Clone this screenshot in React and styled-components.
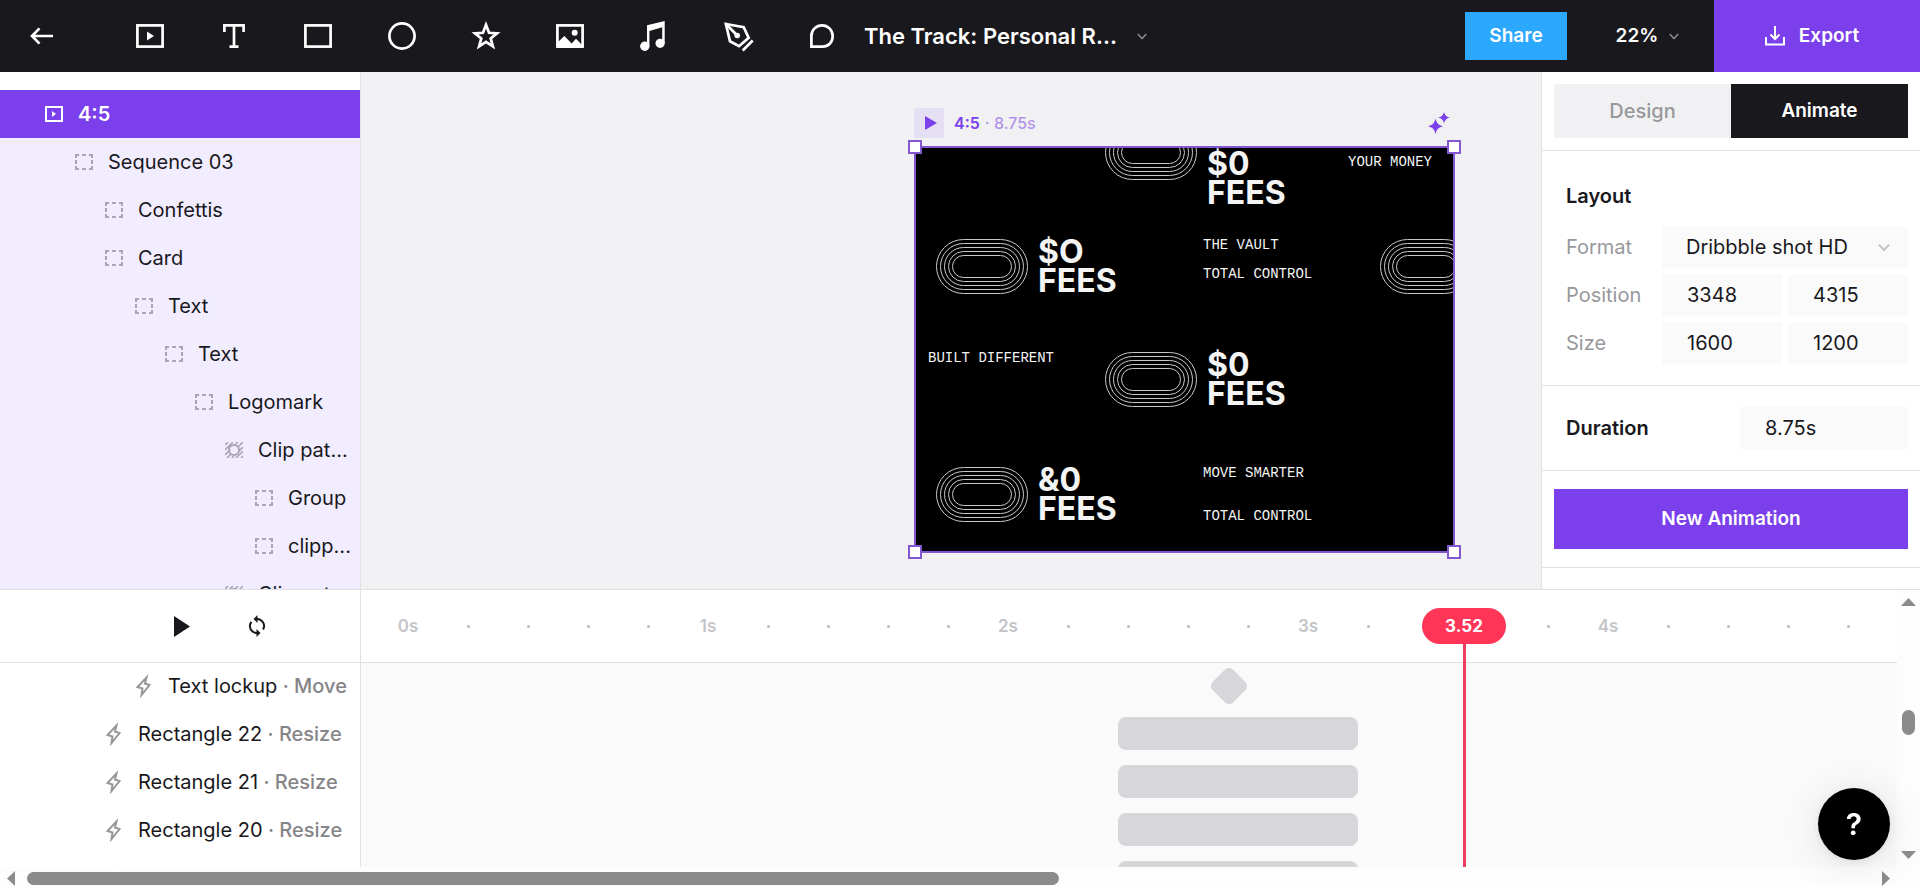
import React from 'react'
import styled, { createGlobalStyle } from 'styled-components'

const colors = {
    purple: '#7b40eb',
    frame: '#8457d2',
    dark: '#19181d',
    canvas: '#f1f1f4',
    line: '#e1e1e3',
    field: '#fafafa',
    muted: '#98989c',
    clip: '#d7d6db',
    red: '#ff3557',
    scroll: '#8b8b8b',
}

const PX_PER_SECOND = 300
const RULER_START = 47

const GlobalStyle = createGlobalStyle`
    * {
        box-sizing: border-box;
    }

    body {
        margin: 0;
        overflow: hidden;
        font-family: Inter, "Liberation Sans", sans-serif;
        font-size: 20px;
        line-height: 24px;
        color: ${colors.dark};
    }

    button, input, select {
        margin: 0;
        padding: 0;
        border: 0;
        border-radius: 0;
        background: none;
        color: inherit;
        font: inherit;
    }

    svg {
        display: block;
        flex: none;
    }
`

const Page = styled.div`
    display: flex;
    flex-direction: column;
    height: 100vh;
    background: white;
`

/* top bar */

const TopBar = styled.header`
    display: flex;
    flex: none;
    height: 72px;
    background: ${colors.dark};
    color: white;
`

const BackButton = styled.button`
    display: flex;
    align-items: center;
    justify-content: center;
    width: 83px;
    margin-right: 25px;
`

const Tools = styled.nav`
    display: flex;
`

const ToolButton = styled.button`
    display: flex;
    align-items: center;
    justify-content: center;
    width: 84px;
`

const TitleButton = styled.button`
    display: flex;
    align-items: center;
    gap: 20px;
    font-size: 22px;
    font-weight: 600;
`

const Actions = styled.div`
    display: flex;
    align-items: center;
    margin-left: auto;
    font-size: 19px;
    font-weight: 600;
`

const ShareButton = styled.button`
    width: 102px;
    height: 48px;
    background: #2ca8ff;
`

const ZoomButton = styled.button`
    display: flex;
    align-items: center;
    justify-content: center;
    gap: 11px;
    width: 147px;
    height: 72px;
    padding-left: 14px;
`

const ExportButton = styled.button`
    display: flex;
    align-items: center;
    justify-content: center;
    gap: 14px;
    width: 206px;
    height: 72px;
    padding-right: 10px;
    background: ${colors.purple};
`

/* layers */

const Main = styled.main`
    display: flex;
    flex: 1;
    min-height: 0;
`

const Layers = styled.aside`
    flex: none;
    width: 361px;
    padding-top: 18px;
    overflow: hidden;
    border-right: 1px solid ${colors.line};
`

const LayerRow = styled.div`
    display: flex;
    align-items: center;
    gap: 15px;
    height: 48px;
    padding-left: ${({ $level }) => 45 + $level * 30}px;
    padding-right: 8px;
    background: ${({ $active }) => ($active ? colors.purple : '#f1edfe')};
    color: ${({ $active }) => ($active ? 'white' : colors.dark)};
    font-weight: ${({ $active }) => ($active ? 600 : 400)};
`

const LayerName = styled.span`
    white-space: nowrap;
`

/* canvas */

const Canvas = styled.section`
    position: relative;
    flex: 1;
    min-width: 0;
    overflow: hidden;
    background: ${colors.canvas};
`

const Frame = styled.div`
    position: absolute;
    left: 553px;
    top: 36px;
    width: 541px;
`

const FrameHeader = styled.div`
    display: flex;
    align-items: center;
    height: 30px;
    margin-bottom: 8px;
    color: ${colors.purple};
    font-size: 16px;
    font-weight: 600;
`

const FramePlay = styled.button`
    display: flex;
    align-items: center;
    justify-content: center;
    width: 30px;
    height: 30px;
    margin-right: 10px;
    padding-left: 3px;
    background: #e4dff2;
`

const FrameTime = styled.span`
    margin-left: 5px;
    color: #b294ea;
    font-weight: 500;
`

const SparkButton = styled.button`
    margin-left: auto;
    margin-right: 5px;
`

const Artboard = styled.div`
    position: relative;
    height: 407px;
    border: 2px solid ${colors.frame};
    background: black;
    color: #f4f4f4;
`

const ArtClip = styled.div`
    position: absolute;
    inset: 0;
    overflow: hidden;
`

const ArtItem = styled.div`
    position: absolute;
    left: ${({ $x }) => $x}px;
    top: ${({ $y }) => $y}px;
`

const Fees = styled(ArtItem)`
    font-size: 32px;
    line-height: 29px;
    font-weight: 700;
`

const Caption = styled(ArtItem)`
    font-family: "Liberation Mono", monospace;
    font-size: 14px;
    line-height: 16px;
    white-space: pre;
`

const Handle = styled.span`
    position: absolute;
    width: 14px;
    height: 14px;
    border: 2px solid ${colors.frame};
    background: white;
    ${({ $v }) => $v}: -8px;
    ${({ $h }) => $h}: -8px;
`

/* inspector */

const Inspector = styled.aside`
    flex: none;
    width: 379px;
    overflow: hidden;
    border-left: 1px solid ${colors.line};
`

const Section = styled.section`
    padding: ${({ $pad }) => $pad};
    border-bottom: 1px solid ${colors.line};
`

const Tabs = styled.div`
    display: flex;
    height: 54px;
`

const Tab = styled.button`
    flex: 1;
    background: ${({ $active }) => ($active ? colors.dark : colors.canvas)};
    color: ${({ $active }) => ($active ? 'white' : colors.muted)};
    font-size: ${({ $active }) => ($active ? 19 : 20)}px;
    font-weight: ${({ $active }) => ($active ? 600 : 500)};
`

const Heading = styled.h2`
    margin: 0 0 18px;
    font-size: 20px;
    line-height: 24px;
    font-weight: 600;
`

const Fields = styled.div`
    display: grid;
    grid-template-columns: 90px 1fr 1fr;
    gap: 6px;
    align-items: center;
`

const FieldLabel = styled.label`
    color: ${colors.muted};
`

const Field = styled.input`
    width: 100%;
    height: 42px;
    padding-left: 25px;
    background: ${colors.field};
`

const SelectWrap = styled.div`
    display: flex;
    align-items: center;
    grid-column: span 2;
    padding-right: 18px;
    background: ${colors.field};
    color: #c4c4c8;
`

const Select = styled.select`
    flex: 1;
    height: 42px;
    padding-left: 24px;
    appearance: none;
    color: ${colors.dark};
`

const DurationRow = styled.div`
    display: grid;
    grid-template-columns: 1fr 168px;
    align-items: center;
    font-weight: 600;

    input {
        font-weight: 400;
    }
`

const AnimationButton = styled.button`
    display: block;
    width: 100%;
    height: 60px;
    background: ${colors.purple};
    color: white;
    font-size: 19px;
    font-weight: 600;
`

/* timeline */

const Timeline = styled.section`
    display: flex;
    flex-direction: column;
    flex: none;
    height: 297px;
    border-top: 1px solid ${colors.line};
`

const TimelineBody = styled.div`
    display: flex;
    flex: 1;
    min-height: 0;
`

const TrackList = styled.div`
    flex: none;
    width: 361px;
    overflow: hidden;
    border-right: 1px solid ${colors.line};
`

const Transport = styled.div`
    display: flex;
    align-items: center;
    gap: 58px;
    height: 73px;
    padding-left: 174px;
    border-bottom: 1px solid ${colors.line};
`

const TrackRow = styled.div`
    display: flex;
    align-items: center;
    height: 48px;
    padding-bottom: 3px;
    padding-left: ${({ $level }) => 75 + $level * 30}px;
    white-space: pre;
`

const TrackName = styled.span`
    margin-left: 16px;
`

const TrackEffect = styled.span`
    color: #858588;
    font-weight: 500;
`

const Tracks = styled.div`
    position: relative;
    flex: 1;
    min-width: 0;
    overflow: hidden;
    background: ${colors.field};
`

const Ruler = styled.div`
    display: flex;
    align-items: center;
    height: 73px;
    padding-left: 17px;
    border-bottom: 1px solid ${colors.line};
    background: white;
    color: #c4c4c7;
    font-size: 17px;
    font-weight: 600;
`

const Tick = styled.span`
    display: flex;
    flex: none;
    align-items: center;
    justify-content: center;
    width: 60px;
`

const Dot = styled.i`
    width: 3px;
    height: 3px;
    border-radius: 50%;
    background: #b9b9bc;
`

const Lane = styled.div`
    display: flex;
    align-items: center;
    height: 48px;
    padding-bottom: 3px;
`

const Clip = styled.div`
    flex: none;
    height: 33px;
    border-radius: 8px;
    background: ${colors.clip};
`

const Playhead = styled.div`
    position: absolute;
    top: 18px;
    bottom: 0;
    display: flex;
    flex-direction: column;
    align-items: center;
    width: 84px;
    margin-left: -42px;
`

const PlayheadTime = styled.span`
    width: 84px;
    height: 36px;
    border-radius: 18px;
    background: ${colors.red};
    color: white;
    font-size: 17px;
    line-height: 36px;
    font-weight: 700;
    text-align: center;
`

const PlayheadLine = styled.span`
    flex: 1;
    width: 3px;
    background: #ee3f60;
`

const ScrollY = styled.div`
    display: flex;
    flex-direction: column;
    align-items: center;
    flex: none;
    width: 23px;
    padding: 8px 0;
    background: #fdfdfd;
`

const ScrollX = styled.div`
    display: flex;
    align-items: center;
    flex: none;
    height: 19px;
    padding: 4px 30px 0 7px;
    background: #fdfdfd;
`

const ScrollRail = styled.div`
    flex: 1;
    margin: ${({ $vertical }) => ($vertical ? '104px 0 0' : '0 12px')};
`

const ThumbY = styled.div`
    width: 13px;
    height: 25px;
    border-radius: 7px;
    background: ${colors.scroll};
`

const ThumbX = styled.div`
    width: 56%;
    height: 13px;
    border-radius: 7px;
    background: ${colors.scroll};
`

const HelpButton = styled.button`
    position: fixed;
    right: 30px;
    bottom: 26px;
    width: 72px;
    height: 72px;
    border-radius: 50%;
    background: black;
    box-shadow: 0 4px 40px rgba(0, 0, 0, 0.1), 0 2px 10px rgba(0, 0, 0, 0.08);
    color: white;
    font-size: 30px;
    font-weight: 600;
`

/* icons */

const ToolIcon = ({ children }) => (
    <svg width="32" height="32" viewBox="0 0 32 32" fill="none" stroke="currentColor" strokeWidth="2.7">
        {children}
    </svg>
)

const tools = [
    {
        name: 'Artboard',
        icon: (
            <>
                <rect x="3.4" y="5.4" width="25.2" height="21.2" />
                <path d="M13 11.5v9l7-4.5z" fill="currentColor" stroke="none" />
            </>
        ),
    },
    { name: 'Text', icon: <path d="M6.4 12V5.4h19.2V12M16 5.4v21.2M11.5 26.7h9" /> },
    { name: 'Rectangle', icon: <rect x="3.4" y="5.4" width="25.2" height="21.2" /> },
    { name: 'Ellipse', icon: <circle cx="16" cy="16" r="12.6" /> },
    {
        name: 'Star',
        icon: <path d="M16 4.8l3 8 8 .5-6.3 5.1 2.2 7.9L16 21.8l-6.9 4.5 2.2-7.9L5 13.3l8-.5z" />,
    },
    {
        name: 'Image',
        icon: (
            <>
                <rect x="3.4" y="5.4" width="25.2" height="21.2" />
                <circle cx="20.7" cy="12.7" r="3" fill="currentColor" stroke="none" />
                <path d="M4 22l6.3-6 7.4 7.5 4.3-4.8 6 6.3v3H4z" fill="currentColor" stroke="none" />
            </>
        ),
    },
    {
        name: 'Audio',
        icon: (
            <g fill="currentColor" stroke="none">
                <path d="M9 5.3L26.7.9v22.4h-2.5V7.3L11.4 11v15.3H9z" />
                <circle cx="6.8" cy="26.2" r="4.7" />
                <circle cx="22.1" cy="23.3" r="4.6" />
            </g>
        ),
    },
    {
        name: 'Pen',
        icon: (
            <>
                <path d="M3.9 4l17.8 3.2 5 10.6-9.7 8.4-9-4.9z" />
                <path d="M3.5 3.5L15 15.3M20.7 30.5l10-10" />
                <circle cx="15.2" cy="15.5" r="2.8" fill="currentColor" stroke="none" />
            </>
        ),
    },
    { name: 'Comment', icon: <path d="M5.4 26.6V15.8a10.6 10.5 0 0 1 21.2 0v1a9.8 9.8 0 0 1-9.8 9.8z" /> },
]

const BackIcon = () => (
    <svg width="23" height="18" viewBox="0 0 23 18" fill="none" stroke="currentColor" strokeWidth="2.7">
        <path d="M9.5 1.4L2 9l7.5 7.6M2.5 9H23" />
    </svg>
)

const Chevron = ({ size = 10, color = '#88878b' }) => (
    <svg width={size} height={size} viewBox="0 0 10 10" fill="none" stroke={color} strokeWidth="1.6">
        <path d="M.7 3L5 7.5 9.3 3" />
    </svg>
)

const ExportIcon = () => (
    <svg width="20" height="20" viewBox="0 0 20 20" fill="none" stroke="currentColor" strokeWidth="2">
        <path d="M1 11v7.5h18V11M10 0v12.5M5.5 8.5L10 13l4.5-4.5" />
    </svg>
)

const PlayIcon = ({ width, height }) => (
    <svg width={width} height={height} viewBox="0 0 16 20" preserveAspectRatio="none">
        <path d="M0 0v20l16-10z" fill="currentColor" />
    </svg>
)

const LoopIcon = () => (
    <svg width="18" height="22" viewBox="0 0 18 22" fill="none" stroke="currentColor" strokeWidth="2">
        <path d="M4.2 16.3a7 7 0 0 1-.8-9.5M8.5 4a7 7 0 0 1 6.500 10.600M9.5 18a7 7 0 0 1-5.500-2" />
        <path d="M9.5 0v8l-4-4zM8.500 14v8l4-4z" fill="currentColor" stroke="none" />
    </svg>
)

const SparkIcon = () => (
    <svg width="22" height="22" viewBox="0 0 22 22" fill="currentColor">
        <path d="M7.5 6.5Q8.5 13 15 14.2 8.5 15.5 7.5 22 6.5 15.5 0 14.2 6.5 13 7.5 6.5zM16 0q.8 4.8 6 5.600-5.200.9-6 5.900-.8-5-6-5.900 5.200-.8 6-5.600z" />
    </svg>
)

const ArtboardIcon = () => (
    <svg width="18" height="16" viewBox="0 0 18 16" fill="none" stroke="currentColor" strokeWidth="2">
        <rect x="1" y="1" width="16" height="14" />
        <path d="M7 5v6l4-3z" fill="currentColor" stroke="none" />
    </svg>
)

const GroupIcon = () => (
    <svg width="18" height="16" viewBox="0 0 18 16" fill="none" stroke="#aaa5b5" strokeWidth="2">
        <path d="M1 4V1h3M7 1h4M14 1h3v3M17 6v4M17 12v3h-3M11 15H7M4 15H1v-3M1 10V6" />
    </svg>
)

const MaskIcon = () => (
    <svg width="18" height="16" viewBox="0 0 18 16" fill="none" stroke="#aaa5b5" strokeWidth="1.6">
        <path d="M0 3l3-3M0 8l8-8M0 13l5-5M10 3l3-3M13 5l5-5M14 9l4-4M2 16l4-4M7 16l2-2M11 16l7-7M16 16l2-2" />
        <circle cx="9" cy="8" r="5" strokeWidth="2" />
    </svg>
)

const BoltIcon = () => (
    <svg width="17" height="24" viewBox="0 0 17 24" fill="none" stroke="#98989b" strokeWidth="2">
        <path d="M11.5 3.5L2.5 13l5 1.5-1 6.500L14.500 11l-4.500-1.500z" />
    </svg>
)

const Arrow = ({ path, w, h }) => (
    <svg width={w} height={h} viewBox={`0 0 ${w} ${h}`} fill={colors.scroll}>
        <path d={path} />
    </svg>
)

const Track = () => (
    <svg width="92" height="55" viewBox="0 0 92 55" fill="none" stroke="#c9c9c9">
        {[0, 4, 8, 12, 16].map((d) => (
            <rect key={d} x={d + 0.5} y={d + 0.5} width={91 - d * 2} height={54 - d * 2} rx={27 - d} />
        ))}
    </svg>
)

/* data */

const layers = [
    { name: 'Sequence 03', level: 1 },
    { name: 'Confettis', level: 2 },
    { name: 'Card', level: 2 },
    { name: 'Text', level: 3 },
    { name: 'Text', level: 4 },
    { name: 'Logomark', level: 5 },
    { name: 'Clip pat...', level: 6, mask: true },
    { name: 'Group', level: 7 },
    { name: 'clipp...', level: 7 },
    { name: 'Clip pat...', level: 6, mask: true },
]

const tracks = [
    { name: 'Text lockup', effect: 'Move', level: 2 },
    { name: 'Rectangle 22', effect: 'Resize', level: 1, start: 710, length: 240 },
    { name: 'Rectangle 21', effect: 'Resize', level: 1, start: 710, length: 240 },
    { name: 'Rectangle 20', effect: 'Resize', level: 1, start: 710, length: 240 },
    { name: 'Rectangle 19', effect: 'Resize', level: 1, start: 710, length: 240 },
]

const rings = [[189, -23], [20, 91], [464, 91], [189, 204], [20, 319]]

const fees = [
    { x: 291, y: 1, top: '$0' },
    { x: 122, y: 89, top: '$O' },
    { x: 291, y: 202, top: '$0' },
    { x: 122, y: 317, top: '&0' },
]

const captions = [
    { x: 432, y: 6, text: 'YOUR MONEY' },
    { x: 287, y: 89, text: 'THE VAULT' },
    { x: 287, y: 118, text: 'TOTAL CONTROL' },
    { x: 12, y: 202, text: 'BUILT DIFFERENT' },
    { x: 287, y: 317, text: 'MOVE SMARTER' },
    { x: 287, y: 360, text: 'TOTAL CONTROL' },
]

const ticks = Array.from({ length: 25 }, (_, i) => i)
const playhead = 3.52

export default function App() {
    return (
        <Page>
            <GlobalStyle />
            <TopBar>
                <BackButton aria-label="Back"><BackIcon /></BackButton>
                <Tools>
                    {tools.map(({ name, icon }) => (
                        <ToolButton key={name} aria-label={name}>
                            <ToolIcon>{icon}</ToolIcon>
                        </ToolButton>
                    ))}
                </Tools>
                <TitleButton>
                    The Track: Personal R...
                    <Chevron />
                </TitleButton>
                <Actions>
                    <ShareButton>Share</ShareButton>
                    <ZoomButton>22% <Chevron /></ZoomButton>
                    <ExportButton><ExportIcon />Export</ExportButton>
                </Actions>
            </TopBar>

            <Main>
                <Layers>
                    <LayerRow $level={0} $active>
                        <ArtboardIcon />
                        <LayerName>4:5</LayerName>
                    </LayerRow>
                    {layers.map(({ name, level, mask }, i) => (
                        <LayerRow key={i} $level={level}>
                            {mask ? <MaskIcon /> : <GroupIcon />}
                            <LayerName>{name}</LayerName>
                        </LayerRow>
                    ))}
                </Layers>

                <Canvas>
                    <Frame>
                        <FrameHeader>
                            <FramePlay aria-label="Play artboard"><PlayIcon width={12} height={14} /></FramePlay>
                            4:5
                            <FrameTime>· 8.75s</FrameTime>
                            <SparkButton aria-label="Effects"><SparkIcon /></SparkButton>
                        </FrameHeader>
                        <Artboard>
                            <ArtClip>
                                {rings.map(([x, y]) => (
                                    <ArtItem key={`${x}-${y}`} $x={x} $y={y}><Track /></ArtItem>
                                ))}
                                {fees.map(({ x, y, top }) => (
                                    <Fees key={`${x}-${y}`} $x={x} $y={y}>{top}<br />FEES</Fees>
                                ))}
                                {captions.map(({ x, y, text }) => (
                                    <Caption key={`${x}-${y}`} $x={x} $y={y}>{text}</Caption>
                                ))}
                            </ArtClip>
                            <Handle $v="top" $h="left" />
                            <Handle $v="top" $h="right" />
                            <Handle $v="bottom" $h="left" />
                            <Handle $v="bottom" $h="right" />
                        </Artboard>
                    </Frame>
                </Canvas>

                <Inspector>
                    <Section $pad="12px">
                        <Tabs>
                            <Tab>Design</Tab>
                            <Tab $active>Animate</Tab>
                        </Tabs>
                    </Section>
                    <Section $pad="33px 12px 21px 24px">
                        <Heading>Layout</Heading>
                        <Fields>
                            <FieldLabel htmlFor="format">Format</FieldLabel>
                            <SelectWrap>
                                <Select id="format">
                                    <option>Dribbble shot HD</option>
                                </Select>
                                <Chevron size={12} color="currentColor" />
                            </SelectWrap>
                            <FieldLabel htmlFor="x">Position</FieldLabel>
                            <Field id="x" defaultValue="3348" />
                            <Field aria-label="Position y" defaultValue="4315" />
                            <FieldLabel htmlFor="width">Size</FieldLabel>
                            <Field id="width" defaultValue="1600" />
                            <Field aria-label="Height" defaultValue="1200" />
                        </Fields>
                    </Section>
                    <Section $pad="21px 12px 21px 24px">
                        <DurationRow>
                            <label htmlFor="duration">Duration</label>
                            <Field id="duration" defaultValue="8.75s" />
                        </DurationRow>
                    </Section>
                    <Section $pad="18px 12px">
                        <AnimationButton>New Animation</AnimationButton>
                    </Section>
                </Inspector>
            </Main>

            <Timeline>
                <TimelineBody>
                    <TrackList>
                        <Transport>
                            <button aria-label="Play"><PlayIcon width={16} height={21} /></button>
                            <button aria-label="Loop"><LoopIcon /></button>
                        </Transport>
                        {tracks.map(({ name, effect, level }) => (
                            <TrackRow key={name} $level={level}>
                                <BoltIcon />
                                <TrackName>{name}</TrackName>
                                <TrackEffect> · {effect}</TrackEffect>
                            </TrackRow>
                        ))}
                    </TrackList>
                    <Tracks>
                        <Ruler>
                            {ticks.map((i) => (
                                <Tick key={i}>{i % 5 === 0 ? `${i / 5}s` : <Dot />}</Tick>
                            ))}
                        </Ruler>
                        {tracks.map(({ name, start, length }) => (
                            <Lane key={name}>
                                {length ? (
                                    <Clip style={{ marginLeft: RULER_START + start, width: length }} />
                                ) : (
                                    <svg width="36" height="36" viewBox="0 0 36 36" style={{ marginLeft: RULER_START + 803 }}>
                                        <rect x="3.5" y="3.5" width="29" height="29" rx="6" fill={colors.clip} transform="rotate(45 18 18)" />
                                    </svg>
                                )}
                            </Lane>
                        ))}
                        <Playhead style={{ left: RULER_START + playhead * PX_PER_SECOND }}>
                            <PlayheadTime>{playhead}</PlayheadTime>
                            <PlayheadLine />
                        </Playhead>
                    </Tracks>
                    <ScrollY>
                        <Arrow w={15} h={8} path="M0 8l7.5-8L15 8z" />
                        <ScrollRail $vertical><ThumbY /></ScrollRail>
                        <Arrow w={15} h={8} path="M0 0h15L7.5 8z" />
                    </ScrollY>
                </TimelineBody>
                <ScrollX>
                    <Arrow w={8} h={15} path="M8 0v15L0 7.5z" />
                    <ScrollRail><ThumbX /></ScrollRail>
                    <Arrow w={8} h={15} path="M0 0v15l8-7.5z" />
                </ScrollX>
            </Timeline>

            <HelpButton aria-label="Help">?</HelpButton>
        </Page>
    )
}
